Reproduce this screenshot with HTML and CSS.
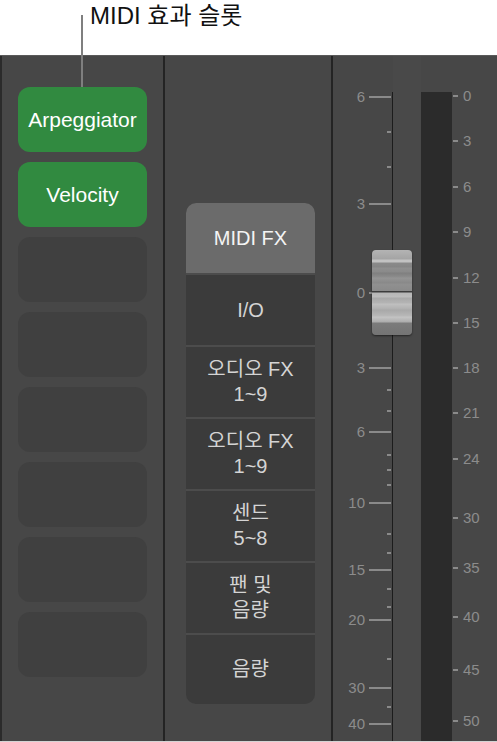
FILE: index.html
```html
<!DOCTYPE html>
<html lang="ko">
<head>
<meta charset="utf-8">
<title>MIDI 효과 슬롯</title>
<link rel="stylesheet" href="styles.css">
</head>
<body>
<div class="page">
  <div class="callout">MIDI 효과 슬롯</div>
  <div class="leader"></div>
  <div class="mixer">
    <div class="strip strip-slots">
      <div class="slot slot-on">Arpeggiator</div>
      <div class="slot slot-on">Velocity</div>
      <div class="slot"></div>
      <div class="slot"></div>
      <div class="slot"></div>
      <div class="slot"></div>
      <div class="slot"></div>
      <div class="slot"></div>
    </div>
    <div class="strip strip-sections">
      <div class="sections">
        <div class="section section-active">MIDI FX</div>
        <div class="section">I/O</div>
        <div class="section">오디오 FX<br>1~9</div>
        <div class="section">오디오 FX<br>1~9</div>
        <div class="section">센드<br>5~8</div>
        <div class="section">팬 및<br>음량</div>
        <div class="section section-last">음량</div>
      </div>
    </div>
    <div class="strip strip-fader">
      <div class="lane"></div>
      <div class="track"></div>
      <div class="meter"></div>

      <div class="lmark" style="top:41px"><span class="lnum">6</span><span class="ltick"></span></div>
      <div class="stick" style="top:76px"></div>
      <div class="stick" style="top:111px"></div>
      <div class="lmark" style="top:148px"><span class="lnum">3</span><span class="ltick"></span></div>
      <div class="lmark" style="top:237px"><span class="lnum">0</span><span class="ltick"></span></div>
      <div class="lmark" style="top:312px"><span class="lnum">3</span><span class="ltick"></span></div>
      <div class="stick" style="top:334px"></div>
      <div class="stick" style="top:355px"></div>
      <div class="lmark" style="top:376px"><span class="lnum">6</span><span class="ltick"></span></div>
      <div class="stick" style="top:399px"></div>
      <div class="stick" style="top:414px"></div>
      <div class="stick" style="top:429px"></div>
      <div class="lmark" style="top:447px"><span class="lnum">10</span><span class="ltick"></span></div>
      <div class="stick" style="top:478px"></div>
      <div class="stick" style="top:497px"></div>
      <div class="lmark" style="top:514px"><span class="lnum">15</span><span class="ltick"></span></div>
      <div class="stick" style="top:533px"></div>
      <div class="stick" style="top:551px"></div>
      <div class="lmark" style="top:564px"><span class="lnum">20</span><span class="ltick"></span></div>
      <div class="stick" style="top:603px"></div>
      <div class="lmark" style="top:632px"><span class="lnum">30</span><span class="ltick"></span></div>
      <div class="stick" style="top:651px"></div>
      <div class="lmark" style="top:668px"><span class="lnum">40</span><span class="ltick"></span></div>

      <div class="rmark" style="top:40px"><span class="rtick"></span><span class="rnum">0</span></div>
      <div class="rmark" style="top:85px"><span class="rtick"></span><span class="rnum">3</span></div>
      <div class="rmark" style="top:131px"><span class="rtick"></span><span class="rnum">6</span></div>
      <div class="rmark" style="top:176px"><span class="rtick"></span><span class="rnum">9</span></div>
      <div class="rmark" style="top:222px"><span class="rtick"></span><span class="rnum">12</span></div>
      <div class="rmark" style="top:267px"><span class="rtick"></span><span class="rnum">15</span></div>
      <div class="rmark" style="top:312px"><span class="rtick"></span><span class="rnum">18</span></div>
      <div class="rmark" style="top:357px"><span class="rtick"></span><span class="rnum">21</span></div>
      <div class="rmark" style="top:403px"><span class="rtick"></span><span class="rnum">24</span></div>
      <div class="rmark" style="top:462px"><span class="rtick"></span><span class="rnum">30</span></div>
      <div class="rmark" style="top:512px"><span class="rtick"></span><span class="rnum">35</span></div>
      <div class="rmark" style="top:561px"><span class="rtick"></span><span class="rnum">40</span></div>
      <div class="rmark" style="top:614px"><span class="rtick"></span><span class="rnum">45</span></div>
      <div class="rmark" style="top:665px"><span class="rtick"></span><span class="rnum">50</span></div>

      <div class="cap"></div>
    </div>
  </div>
</div>
</body>
</html>
```

FILE: styles.css
```css
html, body {
  margin: 0;
  padding: 0;
  background: #ffffff;
}

body {
  font-family: "Liberation Sans", "Noto Sans CJK KR", sans-serif;
}

.page {
  position: relative;
  width: 497px;
  height: 742px;
  overflow: hidden;
}

.callout {
  height: 55px;
  box-sizing: border-box;
  padding: 2px 0 0 90px;
  font-size: 24px;
  line-height: 28px;
  color: #111111;
}

.leader {
  position: absolute;
  left: 81px;
  top: 15px;
  width: 2px;
  height: 72px;
  background: #7f7f7f;
  z-index: 2;
}

.mixer {
  display: flex;
  height: 687px;
  box-sizing: border-box;
  border-top: 1px solid #5a5a5a;
  border-bottom: 1px solid #d4d4d4;
  background: #474747;
}

.strip {
  box-sizing: border-box;
}

.strip-slots {
  width: 165px;
  border-left: 2px solid #2b2b2b;
  border-right: 2px solid #242424;
  padding: 31px 0 0 16px;
  display: flex;
  flex-direction: column;
  gap: 10px;
}

.slot {
  width: 129px;
  height: 65px;
  flex: none;
  border-radius: 12px;
  background: #404040;
  display: flex;
  align-items: center;
  justify-content: center;
  font-size: 21px;
  color: #ffffff;
}

.slot-on {
  background: #318a40;
}

.strip-sections {
  width: 168px;
  border-right: 2px solid #242424;
  padding: 147px 0 0 21px;
}

.sections {
  width: 129px;
  border-radius: 10px;
  overflow: hidden;
  background: #3b3b3b;
}

.section {
  height: 70px;
  border-top: 2px solid #4c4c4c;
  display: flex;
  align-items: center;
  justify-content: center;
  text-align: center;
  font-size: 20px;
  line-height: 25px;
  color: #d4d4d4;
}

.section-active {
  border-top: none;
  background: #6b6b6b;
  color: #f4f4f4;
}

.section-last {
  height: 69px;
}

.strip-fader {
  flex: 1;
  position: relative;
}

.lane {
  position: absolute;
  left: 60px;
  top: 0;
  bottom: 0;
  width: 28px;
  background: #494949;
}

.track {
  position: absolute;
  left: 59px;
  top: 36px;
  bottom: 0;
  width: 1px;
  background: #1c1c1c;
}

.meter {
  position: absolute;
  left: 88px;
  top: 36px;
  bottom: 0;
  width: 31px;
  background: #2b2b2b;
}

.lmark {
  position: absolute;
  left: 0;
  height: 0;
  display: flex;
  align-items: center;
}

.lnum {
  width: 32px;
  text-align: right;
  font-size: 15px;
  line-height: 18px;
  color: #8c8c8c;
}

.ltick {
  margin-left: 4px;
  width: 22px;
  height: 2px;
  background: #8a8a8a;
}

.stick {
  position: absolute;
  left: 54px;
  width: 4px;
  height: 2px;
  margin-top: -1px;
  background: #8a8a8a;
}

.rmark {
  position: absolute;
  left: 120px;
  height: 0;
  display: flex;
  align-items: center;
}

.rtick {
  width: 5px;
  height: 2px;
  background: #8a8a8a;
}

.rnum {
  margin-left: 5px;
  font-size: 15px;
  line-height: 18px;
  color: #8c8c8c;
}

.cap {
  position: absolute;
  left: 39px;
  top: 194px;
  width: 40px;
  height: 85px;
  border-radius: 4px;
  box-shadow: 0 1px 2px rgba(0, 0, 0, 0.5);
  background: linear-gradient(to bottom,
    #b4b4b4 0px, #a4a4a4 9px,
    #c2c2c2 10px, #c2c2c2 12px,
    #8a8a8a 13px, #858585 17px,
    #8f8f8f 18px, #8a8a8a 22px,
    #7f7f7f 23px, #8c8c8c 27px,
    #959595 28px, #888888 33px,
    #909090 34px, #8a8a8a 41px,
    #3c3c3c 41px, #3c3c3c 42px,
    #b6b6b6 43px, #bcbcbc 47px,
    #a9a9a9 48px, #b4b4b4 53px,
    #c0c0c0 54px, #b0b0b0 59px,
    #a8a8a8 60px, #b8b8b8 66px,
    #c4c4c4 67px, #acacac 72px,
    #7b7b7b 73px, #747474 85px);
}
```
